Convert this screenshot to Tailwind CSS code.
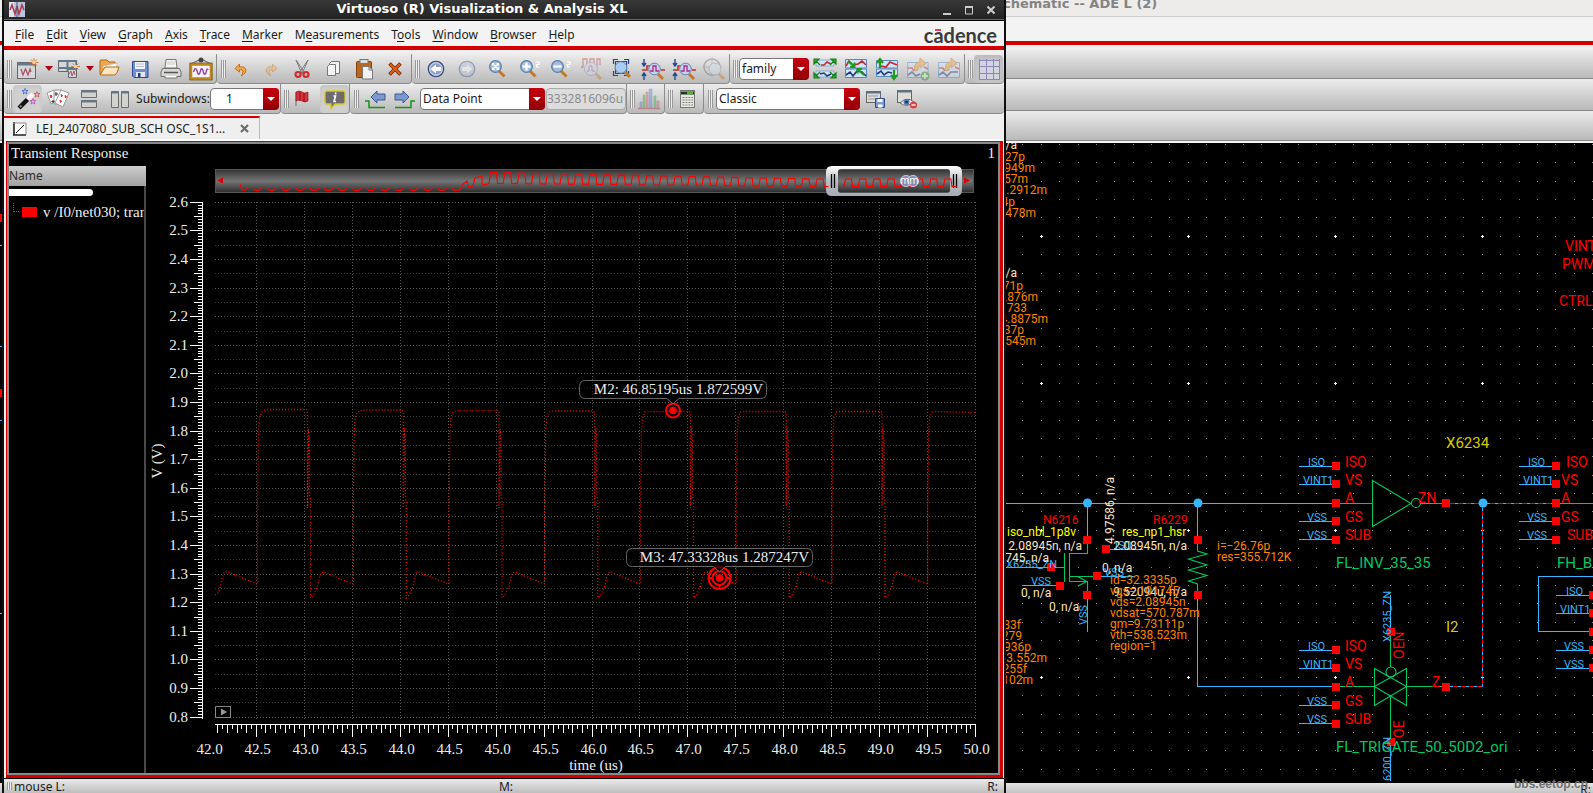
<!DOCTYPE html>
<html lang="en">
<head>
<meta charset="utf-8">
<title>Virtuoso (R) Visualization &amp; Analysis XL</title>
<script src="https://cdn.jsdelivr.net/npm/@tailwindcss/browser@4"></script>
</head>
<body class="h-screen overflow-hidden bg-black font-['Noto_Sans',sans-serif] text-[12px] text-[#1c1c1c]">
<main class="relative h-full overflow-hidden">

<!-- Schematic editor window, behind -->
<section aria-label="Schematic editor" class="flex h-full flex-col">
  <header class="flex h-[17px] shrink-0 items-end overflow-hidden border-b border-[#ccc] bg-[#edecea] pl-[1003px] pb-[2px] font-['DejaVu_Sans',sans-serif] text-[13px] leading-[20px] font-bold text-[#838383]"><span>chematic -- ADE L (2)</span></header>
  <div class="h-[24px] shrink-0 bg-[#f3f3f3]"></div>
  <div class="h-1 shrink-0 bg-[#d40000]"></div>
  <div class="h-[5px] shrink-0 bg-[#f0f0f0]"></div>
  <div class="h-[29px] shrink-0 border-b border-[#888] bg-linear-to-b from-[#ececec] to-[#b9b9b9]"></div>
  <div class="h-[32px] shrink-0 border-b border-[#888] bg-linear-to-b from-[#ececec] to-[#b9b9b9]"></div>
  <div class="h-[30px] shrink-0 border-b border-[#888] bg-linear-to-b from-[#ececec] to-[#b9b9b9]"></div>
  <div class="h-[2px] shrink-0 bg-[#f4f4f4]"></div>
  <div class="min-h-0 flex-1 bg-black">
    <svg class="h-full w-full" viewBox="0 143 1593 640" preserveAspectRatio="xMinYMin slice" font-family="Roboto, sans-serif" font-size="12">
      <g id="dots" shape-rendering="crispEdges"></g>
      <!-- wires -->
      <g fill="none" stroke="#35b6ff" stroke-width="1.2" shape-rendering="crispEdges">
        <path d="M0 245.5H3M0 346.5H3M0 420.5H3M0 613.5H3"/>
        <path d="M1004 503.5H1332M1087.5 503V536M1197.5 503V536M1197.5 599V686.5H1332"/>
        <path d="M1004 567.5H1047M1023 585.5H1056M1087.5 599V632M1110 549.5H1143M1101 576.5H1134"/>
        <path d="M1299 466.5H1332M1299 484.5H1332M1299 521.5H1332M1299 539.5H1332"/>
        <path d="M1299 650.5H1332M1299 668.5H1332M1299 705.5H1332M1299 723.5H1332"/>
        <path d="M1519 466.5H1552M1519 484.5H1552M1519 521.5H1552M1519 539.5H1552"/>
        <path d="M1593 576.5H1538.5V631.5H1589M1556 595.5H1589M1556 613.5H1589M1556 650.5H1589M1556 668.5H1589"/>
        <path d="M1390.5 595V628M1390.5 746V781"/>
        <path d="M1450 503.5H1552M1482.5 503V686.5H1450"/>
      </g>
      <path d="M1450 503.5H1552M1482.5 503V686.5H1450" fill="none" stroke="#f00" stroke-dasharray="5 3" shape-rendering="crispEdges"/>
      <!-- devices -->
      <g fill="none" stroke="#00c864" stroke-width="1.1">
        <path d="M1055 567.5H1064.5M1064.5 553V582M1069.5 553V582M1087.5 544V553.5H1069.5M1069.5 576.5H1093M1069.5 581.500H1087.5V591M1078 577L1087 581.5L1078 586"/>
        <path d="M1197.5 544V551L1207 554L1188.500 559L1207 565L1188.500 570L1207 575.500L1188.500 581L1197.500 584V591"/>
        <path d="M1340 503.500H1372.500M1372.500 480.500L1411 503.500L1372.500 526.500ZM1420.500 503.500H1442"/><circle cx="1416" cy="503" r="4.500"/>
        <path d="M1560 503.500H1593M1340 686.500H1374.500M1406.500 686.500H1442M1390.500 636V667M1390.500 696V738"/>
        <path d="M1374.500 668.500V705.500L1406.500 686.500ZM1406.500 668.500V705.500L1374.500 686.500ZM1374.500 668.500L1406.500 686.500"/><circle cx="1391" cy="672" r="5"/>
      </g>
      <g id="nodes" fill="#35b6ff">
        <circle cx="1087.500" cy="503" r="4.500"/><circle cx="1198" cy="503" r="4.500"/><circle cx="1483" cy="503" r="4.500"/>
      </g>
      <g id="pins" fill="#f00" shape-rendering="crispEdges"></g>
      <g fill="#35b6ff" font-size="11">
        <text x="1006" y="568">X6235_ZN</text><text x="1031" y="585">VSS</text><text x="1115" y="549">ISO</text><text x="1104" y="576">VSS</text>
        <text transform="translate(1087 625) rotate(-90)">VSS</text>
        <text x="1308" y="466">ISO</text><text x="1303" y="484">VINT1</text><text x="1307" y="521">VSS</text><text x="1307" y="539">VSS</text>
        <text x="1308" y="650">ISO</text><text x="1303" y="668">VINT1</text><text x="1307" y="705">VSS</text><text x="1307" y="723">VSS</text>
        <text x="1528" y="466">ISO</text><text x="1523" y="484">VINT1</text><text x="1527" y="521">VSS</text><text x="1527" y="539">VSS</text>
        <text x="1566" y="595">ISO</text><text x="1560" y="613">VINT1</text><text x="1564" y="650">VSS</text><text x="1564" y="668">VSS</text>
        <text transform="translate(1391 642) rotate(-90)">X6235_ZN</text><text transform="translate(1391 781) rotate(-90)">6200_ZN</text>
      </g>
      <g fill="#f00" font-size="14">
        <text x="1043" y="524" font-size="12">N6216</text><text x="1153" y="524" font-size="12">R6229</text>
        <text x="1565" y="251">VINT</text><text x="1562" y="269">PWM</text><text x="1559" y="306">CTRL</text>
        <text x="1345" y="467">ISO</text><text x="1345" y="485">VS</text><text x="1345" y="503">A</text><text x="1345" y="522">GS</text><text x="1345" y="540">SUB</text>
        <text x="1345" y="651">ISO</text><text x="1345" y="669">VS</text><text x="1345" y="687">A</text><text x="1345" y="706">GS</text><text x="1345" y="724">SUB</text>
        <text x="1566" y="467">ISO</text><text x="1561" y="485">VS</text><text x="1561" y="503">A</text><text x="1561" y="522">GS</text><text x="1567" y="540">SUB</text>
        <text x="1418" y="503">ZN</text><text x="1432" y="687">Z</text>
        <text transform="translate(1404 659) rotate(-90)">OEN</text><text transform="translate(1404 738) rotate(-90)">OE</text>
      </g>
      <g fill="#ff0"><text x="1007" y="536">iso_nbl_1p8v</text><text x="1122" y="536">res_np1_hsr</text></g>
      <g fill="#d8cc00" font-size="15"><text x="1446" y="448">X6234</text><text x="1446" y="632">I2</text></g>
      <g fill="#00c864" font-size="15"><text x="1336" y="568">FL_INV_35_35</text><text x="1557" y="568">FH_B</text><text x="1336" y="752">FL_TRIGATE_50_50D2_ori</text></g>
      <g fill="#ffe4c0">
        <text x="1082" y="550" text-anchor="end">2.08945n, n/a</text><text x="1187" y="550" text-anchor="end">2.08945n, n/a</text>
        <text x="1049" y="562" text-anchor="end">745, n/a</text><text x="1102" y="572">0, n/a</text><text x="1021" y="597">0, n/a</text><text x="1049" y="611">0, n/a</text>
        <text x="1187" y="596" text-anchor="end">9.52094u, n/a</text><text transform="translate(1114 544) rotate(-90)">4.97586, n/a</text>
        <text x="1017" y="149" text-anchor="end">n/a</text><text x="1017" y="277" text-anchor="end">n/a</text>
      </g>
      <g fill="#ff8200">
        <text x="1110" y="584">id=32.3335p</text><text x="1110" y="595">vgs=.101745</text><text x="1110" y="606">vds=2.08945n</text><text x="1110" y="617">vdsat=570.787m</text><text x="1110" y="628">gm=9.73111p</text><text x="1110" y="639">vth=538.523m</text><text x="1110" y="650">region=1</text>
        <text x="1217" y="550">i=−26.76p</text><text x="1217" y="561">res=355.712K</text>
      </g>
      <g fill="#ff8200" text-anchor="end">
        <text x="1021" y="629">83f</text><text x="1022" y="640">279</text><text x="1031" y="651">936p</text><text x="1047" y="662">3.552m</text><text x="1027" y="673">255f</text><text x="1033" y="684">102m</text>
        <text x="1025" y="161">27p</text><text x="1035" y="172">949m</text><text x="1028" y="183">57m</text><text x="1047" y="194">1.2912m</text><text x="1015" y="206">4p</text><text x="1036" y="217">478m</text>
        <text x="1023" y="290">71p</text><text x="1038" y="301">.876m</text><text x="1027" y="312">733</text><text x="1048" y="323">4.8875m</text><text x="1024" y="334">37p</text><text x="1036" y="345">545m</text>
      </g>
    </svg>
  </div>
  <footer class="relative flex h-[10px] shrink-0 justify-end bg-linear-to-b from-[#e4e4e4] to-[#c4c4c4] pr-[2px] leading-[14px]"><span class="absolute right-[5px] bottom-0 font-['Liberation_Sans',sans-serif] text-[12px] leading-[18px] font-bold text-[#707070]">bbs.eetop.cn</span><span>R:</span></footer>
</section>

<!-- Waveform viewer window, in front -->
<section aria-label="Visualization and Analysis" class="absolute inset-y-0 left-[2px] right-[587px] flex flex-col border-x-2 border-[#101010] bg-[#efefef]">
  <header class="flex h-[21px] shrink-0 items-center border-b border-black bg-linear-to-b from-[#383838] to-[#222] shadow-[inset_0_-1px_0_#4a6a90]">
    <svg class="ml-[5px] size-4" viewBox="0 0 16 16"><rect width="16" height="15" fill="#b9c4dc"/><path d="M0 0H5V15H0z" fill="#dfe4ef"/><path d="M1 8L3 3L6 12L8 4L10 12L13 3L15 8" fill="none" stroke="#b03848" stroke-width="1.500"/><path d="M8 0V15" stroke="#4a5c88"/></svg>
    <h1 class="flex-1 pb-[2px] text-center font-['DejaVu_Sans',sans-serif] text-[13px] leading-[16px] font-bold text-white">Virtuoso (R) Visualization &amp; Analysis XL</h1>
    <div class="flex gap-[6px] pr-[5px] pb-px">
      <button aria-label="Minimize" class="flex size-4 items-center justify-center"><svg class="size-3" viewBox="0 0 12 12"><path d="M2 10H10" stroke="#ccc" stroke-width="2"/></svg></button>
      <button aria-label="Maximize" class="flex size-4 items-center justify-center"><svg class="size-3" viewBox="0 0 12 12"><path d="M2.500 3V10H9.500V3" fill="none" stroke="#ccc"/><path d="M2 3H10" stroke="#ccc" stroke-width="2"/></svg></button>
      <button aria-label="Close" class="flex size-4 items-center justify-center"><svg class="size-3" viewBox="0 0 12 12"><path d="M2.500 2.500L9.500 9.500M9.500 2.500L2.500 9.500" stroke="#ccc" stroke-width="2"/></svg></button>
    </div>
  </header>

  <nav class="flex h-[25px] shrink-0 items-center bg-[#f3f3f3] pl-[5px] pt-[2px]">
    <button class="px-[6px]"><u class="underline-offset-2">F</u>ile</button><button class="px-[6px]"><u class="underline-offset-2">E</u>dit</button><button class="px-[6px]"><u class="underline-offset-2">V</u>iew</button><button class="px-[6px]"><u class="underline-offset-2">G</u>raph</button><button class="px-[6px]"><u class="underline-offset-2">A</u>xis</button><button class="px-[6px]"><u class="underline-offset-2">T</u>race</button><button class="px-[6px]"><u class="underline-offset-2">M</u>arker</button><button class="px-[6px]">M<u class="underline-offset-2">e</u>asurements</button><button class="px-[6px]">T<u class="underline-offset-2">o</u>ols</button><button class="px-[6px]"><u class="underline-offset-2">W</u>indow</button><button class="px-[6px]"><u class="underline-offset-2">B</u>rowser</button><button class="px-[6px]"><u class="underline-offset-2">H</u>elp</button>
    <span class="ml-auto pr-[7px] font-['Lato',sans-serif] text-[20px] leading-[20px] font-bold text-[#3a3a3a]">c<span class="relative">a<i class="absolute top-[6px] left-[2px] h-[2px] w-[6px] bg-[#e04050]"></i></span>dence</span>
  </nav>
  <div class="h-1 shrink-0 bg-[#d40000]"></div>
  <div class="h-1 shrink-0 bg-[#efefef]"></div>

  <!-- Toolbar, first row -->
  <div class="flex h-[30px] shrink-0">
    <div role="toolbar" class="flex w-[213px] items-center rounded-b border-r border-b border-[#8c8c8c] bg-linear-to-b from-[#ececec] to-[#b9b9b9]">
      <span class="ml-[3px] mr-px h-[18px] w-[5px] bg-[repeating-linear-gradient(90deg,#999_0_1px,#eee_1px_2px)]"></span>
      <button aria-label="New window" class="flex w-[28px] justify-center"><svg class="size-6" viewBox="0 0 24 24"><rect x="2.500" y="5.500" width="18" height="16" fill="#d4d8da" stroke="#666"/><path d="M2 7H21" stroke="#667888" stroke-width="3"/><path d="M6 12L8 18L10.500 12L13 18L15 12L16 15" fill="none" stroke="#b05065" stroke-width="1.300"/><path d="M19 1V10M14.500 5.500H23.500M16 2.500L22 8.500M22 2.500L16 8.500" stroke="#cf6a14" stroke-width=".8"/><circle cx="19" cy="5.500" r="1.800" fill="#fc9"/></svg></button>
      <button aria-label="New window options" class="flex w-[12px] justify-end"><svg class="h-[5px] w-[8px]" viewBox="0 0 8 5"><path d="M0 0H8L4 5z" fill="#b00010"/></svg></button>
      <button aria-label="New subwindow" class="flex w-[30px] justify-center"><svg class="size-6" viewBox="0 0 24 24"><path d="M2.500 3.500H20.500V20.500H12.500V14.500H2.500z" fill="#d4d8da" stroke="#666"/><path d="M2 4H21M11.500 4V14M2 11H11" stroke="#667888" stroke-width="2"/><path d="M12 11.500H20" stroke="#667888" stroke-width="3"/><path d="M13 17L15 14L16 19L18 14L19 18" fill="none" stroke="#b05065"/><path d="M19.500 5V14M15 9.500H24M16.500 6.500L22.500 12.500M22.500 6.500L16.500 12.500" stroke="#cf6a14" stroke-width=".8"/><circle cx="19.500" cy="9.500" r="1.800" fill="#fc9"/></svg></button>
      <button aria-label="New subwindow options" class="flex w-[11px] justify-end"><svg class="h-[5px] w-[8px]" viewBox="0 0 8 5"><path d="M0 0H8L4 5z" fill="#b00010"/></svg></button>
      <button aria-label="Open" class="flex w-[31px] justify-center"><svg class="size-6" viewBox="0 0 24 24"><path d="M3 17V4Q3 3 4 3H10L12 5H18V9" fill="#eda64c" stroke="#b5660f"/><path d="M6 9L20 6L19 16L7 17z" fill="#fff" stroke="#aaa" stroke-width=".6"/><path d="M3 18L8 10H22Q20 17 18 18z" fill="#ffe6c0" stroke="#b5660f"/></svg></button>
      <button aria-label="Save" class="flex w-[31px] justify-center"><svg class="size-6" viewBox="0 0 24 24"><path d="M4.500 4.500H20V20.500H6L4.500 19z" fill="#6f90cc" stroke="#2c4a94"/><path d="M7 5H17V12H7z" fill="#f4f6fa"/><path d="M8 7H16M8 9.500H16" stroke="#b4bccc"/><path d="M8 15H17V20H8z" fill="#dfe4ee"/><path d="M10 16H12.500V20H10z" fill="#24407c"/></svg></button>
      <button aria-label="Print" class="flex w-[31px] justify-center"><svg class="size-6" viewBox="0 0 24 24"><path d="M6 11L7 2.500H17L18 11z" fill="#f4f4f4" stroke="#777"/><path d="M8 5H16M8 7H16" stroke="#ccc"/><path d="M3.500 11.500H20.500L22 15V19.500H2V15z" fill="#d8d8d4" stroke="#707070"/><path d="M5 15.500H19" stroke="#555" stroke-width="1.500"/><path d="M6 19V21H18V19" fill="#fff" stroke="#777"/></svg></button>
      <button aria-label="Save image" class="flex w-[30px] justify-center"><svg class="size-6" viewBox="0 0 24 24"><path d="M2 7L12 2L22 7" fill="none" stroke="#555"/><circle cx="12" cy="3" r="2.500" fill="#444"/><rect x="2" y="7.500" width="20" height="14" fill="#faf6ff" stroke="#c08a1c" stroke-width="2.600"/><path d="M.8 6H23.200V23H.8z" fill="none" stroke="#6d4c0c" stroke-width=".7"/><path d="M4.500 15L6 11.500L7.500 12L9 17L10.500 17L12 12L13.500 12L15 17L16.500 17L18 12L19.500 12.500" fill="none" stroke="#9038a8" stroke-width="1.300" stroke-linejoin="round"/></svg></button>
    </div>
    <div role="toolbar" class="flex w-[195px] items-center rounded-b border-r border-b border-[#8c8c8c] bg-linear-to-b from-[#ececec] to-[#b9b9b9]">
      <span class="ml-[4px] mr-px h-[18px] w-[5px] bg-[repeating-linear-gradient(90deg,#999_0_1px,#eee_1px_2px)]"></span>
      <button aria-label="Undo" class="flex w-[28px] justify-center"><svg class="size-6" viewBox="0 0 24 24"><path d="M12 19Q18 16 16.500 12Q15 9 10.500 10.200V7L6 11.500L10.500 15V12.800Q14 12 14 14.500Q14 17 12 19z" fill="#f8a84a" stroke="#c86c10"/></svg></button>
      <button aria-label="Redo" class="flex w-[31px] justify-center opacity-40"><svg class="size-6" viewBox="0 0 24 24"><path d="M12 19Q6 16 7.500 12Q9 9 13.500 10.200V7L18 11.500L13.500 15V12.800Q10 12 10 14.500Q10 17 12 19z" fill="#f8a84a" stroke="#c86c10"/></svg></button>
      <button aria-label="Cut" class="flex w-[31px] justify-center"><svg class="size-6" viewBox="0 0 24 24"><path d="M6 3L14 15L12 16.500zM18 3L10 15L12 16.500z" fill="#f2f2f2" stroke="#777"/><circle cx="8" cy="17.500" r="2.500" fill="none" stroke="#d42a2a" stroke-width="2.200"/><circle cx="16" cy="17.500" r="2.500" fill="none" stroke="#d42a2a" stroke-width="2.200"/></svg></button>
      <button aria-label="Copy" class="flex w-[31px] justify-center"><svg class="size-6" viewBox="0 0 24 24"><path d="M10.500 4.500H18.500V16.500H8.500V6.500z" fill="#f4f4f4" stroke="#777"/><path d="M8.500 7.500H14.500V18.500H6.500V9.500z" fill="#f4f4f4" stroke="#777"/></svg></button>
      <button aria-label="Paste" class="flex w-[31px] justify-center"><svg class="size-6" viewBox="0 0 24 24"><rect x="4.500" y="4.500" width="15" height="16" rx="1" fill="#b8681c" stroke="#804010"/><rect x="8" y="2.500" width="8" height="4" fill="#ddd" stroke="#777"/><path d="M10.500 9.500H17L20.500 13V22H10.500z" fill="#f2f2f2" stroke="#777"/><path d="M17 9.500V13H20.500" fill="none" stroke="#777"/></svg></button>
      <button aria-label="Delete" class="flex w-[31px] justify-center"><svg class="size-6" viewBox="0 0 24 24"><path d="M6.500 6.500L17.500 17.500M17.500 6.500L6.500 17.500" stroke="#7c2400" stroke-width="3.600"/><path d="M7 7L17 17M17 7L7 17" stroke="#e06418" stroke-width="1.800"/></svg></button>
    </div>
    <div role="toolbar" class="flex w-[318px] items-center rounded-b border-r border-b border-[#8c8c8c] bg-linear-to-b from-[#ececec] to-[#b9b9b9]">
      <span class="ml-[3px] mr-px h-[18px] w-[5px] bg-[repeating-linear-gradient(90deg,#999_0_1px,#eee_1px_2px)]"></span>
      <button aria-label="Previous view" class="flex w-[30px] justify-center"><svg class="size-6" viewBox="0 0 24 24"><circle cx="12" cy="12" r="7.700" fill="#8fa0cc" stroke="#3a4f80" stroke-width="1.300"/><circle cx="12" cy="12" r="6.300" fill="none" stroke="#dde4f4"/><path d="M6.500 12L12 7.500V10H17V14H12V16.500z" fill="#fff"/></svg></button>
      <button aria-label="Next view" class="flex w-[31px] justify-center opacity-40"><svg class="size-6" viewBox="0 0 24 24"><circle cx="12" cy="12" r="7.700" fill="#b4c0dc" stroke="#3a4f80" stroke-width="1.300"/><path d="M17.500 12L12 7.500V10H7V14H12V16.500z" fill="#fff"/></svg></button>
      <button aria-label="Zoom" class="flex w-[31px] justify-center"><svg class="size-6" viewBox="0 0 24 24"><path d="M13 14L18.500 19.500" stroke="#c87820" stroke-width="3"/><circle cx="9.500" cy="9.500" r="5.800" fill="#a4bede" stroke="#5a7ca8" stroke-width="1.300"/><path d="M7 7L12 12M12 7L7 12M6.500 8.500V6.500H8.500M10.500 6.500H12.500V8.500M6.500 10.500V12.500H8.500M10.500 12.500H12.500V10.500" stroke="#fff" stroke-width="1.200" fill="none"/></svg></button>
      <button aria-label="Zoom in" class="flex w-[31px] justify-center"><svg class="size-6" viewBox="0 0 24 24"><path d="M13 14L18.500 19.500" stroke="#c87820" stroke-width="3"/><circle cx="9.500" cy="9.500" r="5.800" fill="#a4bede" stroke="#5a7ca8" stroke-width="1.300"/><path d="M5.500 9.500H13.500M9.500 5.500V13.500" stroke="#fff" stroke-width="2.300"/><path d="M19 5H22V7.500H19.500V10H22" fill="none" stroke="#fff" stroke-width="1.200"/></svg></button>
      <button aria-label="Zoom out" class="flex w-[31px] justify-center"><svg class="size-6" viewBox="0 0 24 24"><path d="M13 14L18.500 19.500" stroke="#c87820" stroke-width="3"/><circle cx="9.500" cy="9.500" r="5.800" fill="#a4bede" stroke="#5a7ca8" stroke-width="1.300"/><path d="M5.500 9.500H13.500" stroke="#fff" stroke-width="2.300"/><path d="M19 5H22V7.500H19.500V10H22" fill="none" stroke="#fff" stroke-width="1.200"/></svg></button>
      <button aria-label="Zoom to trace" class="flex w-[31px] justify-center opacity-40"><svg class="size-6" viewBox="0 0 24 24"><path d="M2 10H4V2H8V9H11V2H15V9H18V2H21V8" fill="none" stroke="#c03030" stroke-width="1.300"/><path d="M16 16L22 22" stroke="#c87820" stroke-width="3"/><circle cx="12" cy="12" r="6.500" fill="#c8d4ec" stroke="#7a8cb0"/><path d="M8 14H10V9H13V14H16" fill="none" stroke="#c03080"/></svg></button>
      <button aria-label="Fit" class="flex w-[31px] justify-center"><svg class="size-6" viewBox="0 0 24 24"><path d="M3.500 7V2.500H8M14 2.500H18.500V7M3.500 14V18.500H8M14 18.500H18.500V14M5.500 4.500H16.500V16.500H5.500z" fill="none" stroke="#1e4a84" stroke-width="1.200"/><path d="M15 15L20 20" stroke="#c87820" stroke-width="3"/><circle cx="11" cy="10.500" r="5.800" fill="#a8cdf0" stroke="#5a86b8"/></svg></button>
      <button aria-label="Fit Y" class="flex w-[31px] justify-center"><svg class="size-6" viewBox="0 0 24 24"><path d="M3 2V8M1 6L3 9L5 6M3 23V17M1 19L3 16L5 19" stroke="#1e4a94" stroke-width="1.400" fill="none"/><path d="M1 13H6V9H9M20 13H24" stroke="#c03030" stroke-width="1.600" fill="none"/><path d="M17 17L22 22" stroke="#c87820" stroke-width="3"/><circle cx="13.500" cy="12" r="5.800" fill="#c4d4f0" stroke="#6a80a8"/><path d="M9 14H12V9H15V14H18" fill="none" stroke="#b02880" stroke-width="1.300"/></svg></button>
      <button aria-label="Fit Y all" class="flex w-[31px] justify-center"><svg class="size-6" viewBox="0 0 24 24"><path d="M3 2V8M1 6L3 9L5 6M3 23V17M1 19L3 16L5 19" stroke="#1e4a94" stroke-width="1.400" fill="none"/><path d="M1 13H6V9H9M20 13H24" stroke="#c03030" stroke-width="1.600" fill="none"/><path d="M17 17L22 22" stroke="#c87820" stroke-width="3"/><circle cx="13.500" cy="12" r="5.800" fill="#c4d4f0" stroke="#6a80a8"/><path d="M9 14H12V9H15V14H18" fill="none" stroke="#b02880" stroke-width="1.300"/></svg></button>
      <button aria-label="Zoom target" class="flex w-[30px] justify-center opacity-40"><svg class="size-6" viewBox="0 0 24 24"><path d="M16 16L22 22" stroke="#c87820" stroke-width="3"/><circle cx="10" cy="10" r="8" fill="none" stroke="#666" stroke-width="1.500"/><path d="M10 0V20M0 10H20" stroke="#888"/><circle cx="13" cy="12" r="6" fill="#d0dcec" stroke="#8090a8"/></svg></button>
    </div>
    <div role="toolbar" class="flex w-[235px] items-center rounded-b border-r border-b border-[#8c8c8c] bg-linear-to-b from-[#ececec] to-[#b9b9b9]">
      <span class="ml-[3px] mr-px h-[18px] w-[5px] bg-[repeating-linear-gradient(90deg,#999_0_1px,#eee_1px_2px)]"></span>
      <label class="relative block h-[22px] w-[70px]"><select aria-label="Strip mode" class="h-full w-full appearance-none rounded border border-[#777] bg-white pl-[2px] text-[12px]"><option>family</option></select><span class="pointer-events-none absolute inset-y-0 right-0 flex w-4 items-center justify-center rounded-r bg-linear-to-b from-[#c8000c] to-[#920008]"><svg class="h-1 w-2" viewBox="0 0 8 4"><path d="M0 0H8L4 4z" fill="#fff"/></svg></span></label>
      <button aria-label="Split all strips" class="flex w-[31px] justify-center"><svg class="size-6" viewBox="0 0 24 24"><path d="M3 3H21V9H3zM3 14H21V20H3z" fill="#d0e4fa" stroke="#7098c8" stroke-width=".7"/><path d="M8 8H11L14 5L18 7" fill="none" stroke="#c02828" stroke-width="1.500"/><path d="M7 17L11 16L14 19L18 17" fill="none" stroke="#203878" stroke-width="1.500"/><path d="M1 2H6L1 7zM23 2H18L23 7zM1 21H6L1 16zM23 21H18L23 16zM3 4L7 8M21 4L17 8M3 19L7 15M21 19L17 15" fill="#2fa82f" stroke="#168016" stroke-width="1.200"/></svg></button>
      <button aria-label="Combine strips" class="flex w-[31px] justify-center"><svg class="size-6" viewBox="0 0 24 24"><path d="M1.500 2.500H22.500V11H1.500zM1.500 12H22.500V20.500H1.500z" fill="#cfe3fa" stroke="#5888c0"/><path d="M2 9L5 4L9 8L14 7L18 4L22 8" fill="none" stroke="#c02828" stroke-width="1.600"/><path d="M2 18L6 15L9 19L13 14L18 15L22 19" fill="none" stroke="#203878" stroke-width="1.600"/><path d="M4 4L10 9.500M20 18L14 12.500M10.500 5.500V10H6M13.500 16.500V12H18" fill="none" stroke="#1f9a1f" stroke-width="2"/></svg></button>
      <button aria-label="Swap strips" class="flex w-[31px] justify-center"><svg class="size-6" viewBox="0 0 24 24"><path d="M1.500 3.500H22.500V11H1.500zM1.500 12H22.500V19.500H1.500z" fill="#cfe3fa" stroke="#5888c0"/><path d="M6 9L11 10L15 5L22 8" fill="none" stroke="#c02828" stroke-width="1.600"/><path d="M2 17L6 14L9 18L13 15L17 16" fill="none" stroke="#203878" stroke-width="1.600"/><path d="M5 11V3M2 6L5 2L8 6M19 13V21M16 18L19 22L22 18" fill="none" stroke="#1f9a1f" stroke-width="2.200"/></svg></button>
      <button aria-label="Append reload" class="flex w-[31px] justify-center opacity-45"><svg class="size-6" viewBox="0 0 24 24"><path d="M1.500 5.500H22V20.500H1.500z" fill="#cfe3fa" stroke="#5888c0"/><path d="M2 11H6L8 14M18 10L22 12" fill="none" stroke="#c02828" stroke-width="1.600"/><path d="M2 18L6 15L10 19L14 17" fill="none" stroke="#203878" stroke-width="1.600"/><path d="M9 14Q7 5 14 5V1L20 6.500L14 11V8Q11 9 12 13z" fill="#f0a040" stroke="#c87010"/><circle cx="19" cy="19" r="4.500" fill="#2a9a2a"/><path d="M16 19H22M19 16V22" stroke="#fff" stroke-width="1.500"/></svg></button>
      <button aria-label="Reload" class="flex w-[31px] justify-center opacity-45"><svg class="size-6" viewBox="0 0 24 24"><path d="M1.500 5.500H22.500V20.500H1.500z" fill="#cfe3fa" stroke="#5888c0"/><path d="M2 11H6L8 14M18 10L22 12" fill="none" stroke="#c02828" stroke-width="1.600"/><path d="M2 18L6 15L10 19L14 15H21" fill="none" stroke="#203878" stroke-width="1.600"/><path d="M9 14Q7 5 14 5V1L20 6.500L14 11V8Q11 9 12 13z" fill="#f0a040" stroke="#c87010"/></svg></button>
    </div>
    <div role="toolbar" class="flex flex-1 items-center rounded-b border-b border-[#8c8c8c] bg-linear-to-b from-[#ececec] to-[#b9b9b9]">
      <span class="ml-[3px] mr-px h-[18px] w-[5px] bg-[repeating-linear-gradient(90deg,#999_0_1px,#eee_1px_2px)]"></span>
      <button aria-label="Grid" aria-pressed="true" class="flex h-[28px] w-[29px] items-center justify-center rounded bg-[#c4c4c6] shadow-inner"><svg class="size-6" viewBox="0 0 24 24"><path d="M2 3H22V23H2z" fill="#d4d4de"/><path d="M2.500 2V23M9.500 2V23M16.500 2V23M22.500 2V23M2 3.500H23M2 9.500H23M2 16.500H23M2 22.500H23" stroke="#8c86bc" stroke-width="1"/></svg></button>
    </div>
  </div>

  <!-- Toolbar, second row -->
  <div class="flex h-[30px] shrink-0">
    <div role="toolbar" class="flex w-[277px] items-center rounded-b border-r border-b border-[#8c8c8c] bg-linear-to-b from-[#ececec] to-[#b9b9b9]">
      <span class="ml-[3px] mr-px h-[18px] w-[5px] bg-[repeating-linear-gradient(90deg,#999_0_1px,#eee_1px_2px)]"></span>
      <button aria-label="Wizard" aria-pressed="true" class="flex h-[28px] w-[29px] items-center justify-center rounded bg-[#d0d0d0] shadow-inner"><svg class="size-6" viewBox="0 0 24 24"><path d="M3 21L12 12" stroke="#111" stroke-width="4.500"/><path d="M11.500 12.500L17 7" stroke="#fafafa" stroke-width="4.500"/><path d="M4 20L5.500 18.500" stroke="#888" stroke-width="2"/><path d="M9 1.500L9.700 3.500H12L10.200 4.800L10.900 7L9 5.700L7.100 7L7.800 4.800L6 3.500H8.300z" fill="none" stroke="#4070e0" stroke-width=".9"/><path d="M21 4.500L21.700 6.500H24L22.200 7.800L22.900 10L21 8.700L19.100 10L19.800 7.800L18 6.500H20.300z" fill="none" stroke="#e05050" stroke-width=".9"/><path d="M17 11.500L17.700 13.500H20L18.200 14.800L18.900 17L17 15.700L15.100 17L15.800 14.800L14 13.500H16.300z" fill="none" stroke="#c050c0" stroke-width=".9"/></svg></button>
      <button aria-label="Cards" class="flex w-[31px] justify-center"><svg class="size-6" viewBox="0 0 24 24"><path d="M1 6L8 3L12 14L5 17z" fill="#fff" stroke="#999"/><path d="M8 3H16V17H8z" fill="#fff" stroke="#999"/><path d="M15 3L23 6L17 20L9 16z" fill="#fff" stroke="#999"/><path d="M4 8L6 9L5 11zM15 7.500L16.500 8.500L15.500 10zM19 8.500L20.500 9.500L19.500 11zM14 13L15.500 14L14.500 15.500z" fill="#e03030" stroke="#e03030"/><path d="M10 5V9M8.500 7H12M7 13V16M5.500 14.500H8.500" stroke="#333"/></svg></button>
      <button aria-label="Horizontal layout" class="flex w-[31px] justify-center"><svg class="size-6" viewBox="0 0 24 24"><path d="M4.500 3.500H19.500V10.500H4.500zM4.500 13.500H19.500V20.500H4.500z" fill="#d2d2ce" stroke="#6c6c6c"/><path d="M4 4.500H20M4 14.500H20" stroke="#66788c" stroke-width="2"/></svg></button>
      <button aria-label="Vertical layout" class="flex w-[31px] justify-center"><svg class="size-6" viewBox="0 0 24 24"><path d="M3.500 4.500H10.500V20.500H3.500zM13.500 4.500H20.500V20.500H13.500z" fill="#d2d2ce" stroke="#6c6c6c"/><path d="M3 5.500H11M13 5.500H21" stroke="#66788c" stroke-width="2"/></svg></button>
      <label for="sub" class="w-[75px] text-right whitespace-nowrap">Subwindows:</label>
      <span class="relative block h-[22px] w-[69px]"><select id="sub" class="h-full w-full appearance-none rounded border border-[#777] bg-white pl-[15px] text-[12px]"><option>1</option></select><span class="pointer-events-none absolute inset-y-0 right-0 flex w-4 items-center justify-center rounded-r bg-linear-to-b from-[#c8000c] to-[#920008]"><svg class="h-1 w-2" viewBox="0 0 8 4"><path d="M0 0H8L4 4z" fill="#fff"/></svg></span></span>
    </div>
    <div role="toolbar" class="flex w-[69px] items-center justify-between rounded-b border-r border-b border-[#8c8c8c] bg-linear-to-b from-[#ececec] to-[#b9b9b9]">
      <span class="ml-[3px] h-[18px] w-[5px] bg-[repeating-linear-gradient(90deg,#999_0_1px,#eee_1px_2px)]"></span>
      <button aria-label="Flag" class="flex w-[30px] justify-start"><svg class="size-6" viewBox="0 0 24 24"><path d="M6 5V19" stroke="#888" stroke-width="1.500"/><path d="M6 5Q9 3 12 5T18 5V14Q15 16 12 14T6 14z" fill="#d83038" stroke="#8c1018" stroke-width=".6"/><path d="M10 5V14M14 6V15" stroke="#a81820" stroke-width="1.500"/></svg></button>
      <button aria-label="Info" aria-pressed="true" class="flex h-[28px] w-[29px] items-center justify-center rounded bg-[#cfcfcf] shadow-inner"><svg class="size-6" viewBox="0 0 24 24"><path d="M4 4H20Q22 4 22 6V15Q22 17 20 17H12L8 22V17H4Q2 17 2 15V6Q2 4 4 4z" fill="#6c6c6c" stroke="#d8c820" stroke-width="1.300"/><path d="M10.500 9H12.500L11 14.500H13M12.800 5.500L12.500 7.300" stroke="#fff" stroke-width="1.600" fill="none"/></svg></button>
    </div>
    <div role="toolbar" class="flex w-[277px] items-center rounded-b border-r border-b border-[#8c8c8c] bg-linear-to-b from-[#ececec] to-[#b9b9b9]">
      <span class="ml-[4px] mr-px h-[18px] w-[5px] bg-[repeating-linear-gradient(90deg,#999_0_1px,#eee_1px_2px)]"></span>
      <button aria-label="Previous point" class="flex w-[30px] justify-center"><svg class="size-6" viewBox="0 0 24 24"><path d="M2 14H6V20.500H22" fill="none" stroke="#149414" stroke-width="1.500"/><path d="M8 10L14 4V7H22V13H14V16z" fill="#7c98d0" stroke="#3c5890"/></svg></button>
      <button aria-label="Next point" class="flex w-[30px] justify-center"><svg class="size-6" viewBox="0 0 24 24"><path d="M2 20.500H18V14H22" fill="none" stroke="#149414" stroke-width="1.500"/><path d="M16 10L10 4V7H2V13H10V16z" fill="#7c98d0" stroke="#3c5890"/></svg></button>
      <span class="relative block h-[22px] w-[125px]"><select aria-label="Step by" class="h-full w-full appearance-none rounded border border-[#777] bg-white pl-[2px] text-[12px]"><option>Data Point</option></select><span class="pointer-events-none absolute inset-y-0 right-0 flex w-4 items-center justify-center rounded-r bg-linear-to-b from-[#c8000c] to-[#920008]"><svg class="h-1 w-2" viewBox="0 0 8 4"><path d="M0 0H8L4 4z" fill="#fff"/></svg></span></span>
      <input aria-label="Step value" disabled value="3332816096u" class="ml-px h-[22px] w-[80px] rounded border border-[#aaa] bg-[#dcdcdc] px-0 text-[12px] text-[#8a8a8a]">
    </div>
    <div role="toolbar" class="flex w-[38px] items-center rounded-b border-r border-b border-[#8c8c8c] bg-linear-to-b from-[#ececec] to-[#b9b9b9]">
      <span class="ml-[3px] mr-px h-[18px] w-[5px] bg-[repeating-linear-gradient(90deg,#999_0_1px,#eee_1px_2px)]"></span>
      <button aria-label="Histogram" class="flex w-[26px] justify-center opacity-40"><svg class="size-6" viewBox="0 0 24 24"><path d="M3 21V15H5V21M12 21V2H15V21" fill="#5080e0" stroke="#4060b0" stroke-width=".6"/><path d="M6 21V8H8V21M17 21V9H19V21" fill="#30b040" stroke="#208030" stroke-width=".6"/><path d="M9 21V5H11V21M20 21V14H22V21" fill="#e06060" stroke="#b03030" stroke-width=".6"/><path d="M1 21.500H23" stroke="#b03030" stroke-width="1.500"/></svg></button>
    </div>
    <div role="toolbar" class="flex w-[39px] items-center rounded-b border-r border-b border-[#8c8c8c] bg-linear-to-b from-[#ececec] to-[#b9b9b9]">
      <span class="ml-[3px] mr-px h-[18px] w-[5px] bg-[repeating-linear-gradient(90deg,#999_0_1px,#eee_1px_2px)]"></span>
      <button aria-label="Calculator" class="flex w-[28px] justify-center"><svg class="size-6" viewBox="0 0 24 24"><rect x="4.500" y="3.500" width="14" height="17" fill="#e6e6e2" stroke="#777"/><path d="M5 6H18" stroke="#1d3a1d" stroke-width="3"/><path d="M11 6H17" stroke="#68e028" stroke-width="1.500"/><path d="M6.500 10.500H17M6.500 13H17M6.500 15.500H17M6.500 18H17" stroke="#777" stroke-width="1.200" stroke-dasharray="1.800 1.200"/></svg></button>
    </div>
    <div role="toolbar" class="flex flex-1 items-center rounded-b border-b border-[#8c8c8c] bg-linear-to-b from-[#ececec] to-[#b9b9b9]">
      <span class="ml-[4px] mr-[3px] h-[18px] w-[5px] bg-[repeating-linear-gradient(90deg,#999_0_1px,#eee_1px_2px)]"></span>
      <span class="relative block h-[22px] w-[144px]"><select aria-label="Workspace" class="h-full w-full appearance-none rounded border border-[#777] bg-white pl-[2px] text-[12px]"><option>Classic</option></select><span class="pointer-events-none absolute inset-y-0 right-0 flex w-4 items-center justify-center rounded-r bg-linear-to-b from-[#c8000c] to-[#920008]"><svg class="h-1 w-2" viewBox="0 0 8 4"><path d="M0 0H8L4 4z" fill="#fff"/></svg></span></span>
      <button aria-label="Save workspace" class="flex w-[31px] justify-center"><svg class="size-6" viewBox="0 0 24 24"><rect x="2.500" y="4.500" width="14" height="11" fill="#dcdcd8" stroke="#666"/><path d="M2 5.500H17" stroke="#5c7488" stroke-width="2"/><path d="M4 9H14M4 12H11" stroke="#999"/><path d="M11.500 11.500H20.500V20.500H11.500z" fill="#7c98d4" stroke="#344c90"/><path d="M13.500 12H18.500V15H13.500zM14 17.500H18.500V20.500H14z" fill="#fff"/></svg></button>
      <button aria-label="Hide" class="flex w-[31px] justify-center"><svg class="size-6" viewBox="0 0 24 24"><rect x="2.500" y="3.500" width="14" height="12" fill="#dcdcd8" stroke="#666"/><path d="M2 4.500H17" stroke="#5c7488" stroke-width="2"/><path d="M5 16Q12 9 19 15Q12 21 5 16z" fill="#f4f6fa" stroke="#666"/><circle cx="11.500" cy="15" r="3" fill="#5878b0"/><circle cx="11.500" cy="15" r="1.300" fill="#182850"/><circle cx="18.500" cy="18" r="3.600" fill="#d84444"/><path d="M16.500 18H20.500" stroke="#fff" stroke-width="1.300"/></svg></button>
    </div>
  </div>

  <!-- Document tab -->
  <div class="flex h-[27px] shrink-0 border-b-2 border-white pt-[2px]">
    <div class="flex w-[256px] items-center border-t-2 border-r border-t-[#d40000] border-r-[#bbb] pl-[9px]">
      <svg class="size-[14px]" viewBox="0 0 14 14"><path d="M1 1H13V13H1z" fill="#fff"/><path d="M1 0V13M0 13H13" stroke="#222" stroke-width="1.600"/><path d="M0 1H13V13" fill="none" stroke="#888"/><path d="M3 11L11 3" stroke="#222"/></svg>
      <span class="ml-[9px] whitespace-nowrap">LEJ_2407080_SUB_SCH OSC_1S1...</span>
      <button aria-label="Close tab" class="mr-[10px] ml-auto"><svg class="size-[9px]" viewBox="0 0 9 9"><path d="M1 1L8 8M8 1L1 8" stroke="#6c6c6c" stroke-width="2.200"/></svg></button>
    </div>
  </div>

  <!-- Plot subwindow -->
  <div class="mr-px ml-[2px] flex min-h-0 flex-1 flex-col border-t border-r-3 border-b-3 border-l border-[#d40000] bg-black font-['Liberation_Serif',serif] text-[15px] text-[#eee]">
    <div class="flex min-h-0 flex-1 flex-col border-2 border-[#888]">
      <div class="flex h-[22px] shrink-0 items-center justify-between px-[2px] pb-[3px] leading-[19px]"><span>Transient Response</span><span class="pr-px">1</span></div>
      <div class="flex min-h-0 flex-1">
        <aside class="w-[137px] shrink-0 overflow-hidden bg-linear-to-l from-[#484848] from-[2px] to-black to-[2px]">
          <div class="h-5 bg-linear-to-b from-[#cdcdcd] to-[#a2a2a2] font-['Noto_Sans',sans-serif] text-[12px] leading-[19px] text-[#2c2c2c]">Name</div>
          <div class="mt-[3px] h-[7px] w-[84px] rounded-r-full bg-white"></div>
          <div class="mt-[6px] mr-[2px] flex h-5 items-center overflow-hidden whitespace-nowrap"><span class="ml-[4px] mb-[9px] h-[9px] w-[6px] shrink-0 border-b border-l border-dotted border-[#666]"></span><span class="ml-[3px] h-[10px] w-[15px] shrink-0 bg-[#f00]"></span><span class="ml-[6px]">v /I0/net030; tran</span></div>
        </aside>
        <div class="min-w-0 flex-1">
          <svg class="h-full w-full" viewBox="146 166 852 607" preserveAspectRatio="xMinYMin meet" font-family="Liberation Serif, serif" font-size="15" fill="#eee">
            <defs>
              <linearGradient id="track" x2="0" y2="1"><stop offset="0" stop-color="#333"/><stop offset=".5" stop-color="#757575"/><stop offset="1" stop-color="#2c2c2c"/></linearGradient>
              <linearGradient id="thumb" x2="0" y2="1"><stop offset="0" stop-color="#fff"/><stop offset=".5" stop-color="#b8bcc2"/><stop offset="1" stop-color="#a4acb8"/></linearGradient>
            </defs>
            <rect x="215.500" y="169.500" width="758" height="23" fill="url(#track)" stroke="#555"/>
            <path d="M832 166H956Q962 166 962 172V190Q962 196 956 196H832Q826 196 826 190V172Q826 166 832 166ZM841 169Q838 169 838 172V190Q838 193 841 193H947Q950 193 950 190V172Q950 169 947 169Z" fill="url(#thumb)" fill-rule="evenodd"/>
            <path d="M831.500 174V188M834.500 174V188M953.500 174V188M956.500 174V188" stroke="#000" stroke-width="1.300"/>
            <path d="M217 180.500L223 177.500V183.500zM970 180.500L964 177.500V183.500z" fill="#d00"/>
            <path id="overview" fill="none" stroke="#f00" stroke-width="1.100"/>
            <g font-family="Noto Sans, sans-serif" font-size="10" text-anchor="middle"><circle cx="906" cy="181" r="5.500" fill="#8a8ab0" stroke="#ccd"/><circle cx="913" cy="181" r="5.500" fill="#8a8ab0" stroke="#ccd"/><text x="905" y="184" fill="#fff">m</text><text x="914" y="184" fill="#fff">m</text></g>
            <g id="grid" shape-rendering="crispEdges"></g>
            <g id="axes" stroke="#fff" shape-rendering="crispEdges"></g>
            <g id="labels"></g>
            <path id="wave" fill="none" stroke="#f00" stroke-dasharray="1 2" stroke-width="1.300"/>
            <text x="596" y="770" text-anchor="middle">time (us)</text>
            <text transform="translate(162 461) rotate(-90)" text-anchor="middle">V (V)</text>
            <g fill="none" stroke="#888"><path d="M215.500 706.500H230.500V717.500H215.500z"/><path d="M221 708.500L227 712L221 715.500z" fill="#999" stroke="none"/></g>
            <g fill="none" stroke="#f00" stroke-width="2"><circle cx="673" cy="410.500" r="7"/><circle cx="673" cy="410.500" r="3.800" fill="#f00" stroke="none"/><circle cx="719.500" cy="578" r="11"/><circle cx="719.500" cy="578" r="7"/><circle cx="719.500" cy="578" r="3.800" fill="#f00" stroke="none"/><path d="M719.500 585V588M709 578H712M727 578H730"/></g>
            <g stroke="#666" fill="#000" fill-opacity=".6">
              <path d="M585.500 380.500H760.500Q766.500 380.500 766.500 386.500V392.500Q766.500 398.500 760.500 398.500H679L673 404L667 398.500H585.500Q579.500 398.500 579.500 392.500V386.500Q579.500 380.500 585.500 380.500z"/>
              <path d="M632.500 548.500H806.500Q812.500 548.500 812.500 554.500V560.500Q812.500 566.500 806.500 566.500H725.500L719.500 572L713.500 566.500H632.500Q626.500 566.500 626.500 560.500V554.500Q626.500 548.500 632.500 548.500z"/>
            </g>
            <text x="763" y="394" text-anchor="end">M2: 46.85195us 1.872599V</text>
            <text x="809" y="562" text-anchor="end">M3: 47.33328us 1.287247V</text>
          </svg>
        </div>
      </div>
    </div>
  </div>
  <footer class="flex h-[15px] shrink-0 items-center overflow-hidden border-t border-black bg-linear-to-b from-[#eaeaea] to-[#bebebe] pl-[3px] pr-[6px] leading-[15px]"><span class="mr-[2px] h-[8px] w-[5px] bg-[repeating-linear-gradient(90deg,#999_0_1px,#eee_1px_2px)]"></span><span class="flex-1">mouse L:</span><span>M:</span><span class="flex-1 text-right">R:</span></footer>
</section>
</main>

<script>
const NS = 'http://www.w3.org/2000/svg';
function add(parent, tag, attrs, text) {
  const el = document.createElementNS(NS, tag);
  for (const k in attrs) el.setAttribute(k, attrs[k]);
  if (text) el.textContent = text;
  document.getElementById(parent).appendChild(el);
}

// Schematic canvas: minor grid dots and major crosses
let minor = '', major = '';
for (let i = -56; i <= 31; i++) for (let j = -21; j <= 13; j++) {
  const x = Math.floor(1041.300 + i * 18.375), y = Math.floor(530.300 + j * 18.375);
  if (y > 782 || y < 143) continue;
  if (i % 8 === 0 && j % 8 === 0) major += `M${x - 1} ${y}h3v1h-3zM${x} ${y - 1}h1v3h-1z`;
  else minor += `M${x} ${y}h1v1h-1z`;
}
add('dots', 'path', { d: minor, fill: '#8a8a94' });
add('dots', 'path', { d: major, fill: '#fff' });
let pinPath = '';
for (const [x, y] of [[1087,540],[1198,540],[1198,595],[1106,549],[1097,576],[1087,595],[1051,567],[1060,586],
  [1336,466],[1336,484],[1336,503],[1336,521],[1336,540],[1336,650],[1336,668],[1336,687],[1336,705],[1336,724],
  [1556,466],[1556,484],[1556,503],[1556,521],[1556,540],[1446,503],[1446,687],[1391,632],[1391,742],
  [1593,595],[1593,613],[1593,632],[1593,650],[1593,668],[-2,218],[-2,393]])
  pinPath += `M${x - 4} ${y - 4}h8v8h-8z`;
add('pins', 'path', { d: pinPath });

// Plot axes and grid
const X0 = 208.400, DX = 95.900, Y0 = 202.300, DY = 286;
const px = v => Math.floor(X0 + (v - 42) * DX) + .5;
const py = v => Math.floor(Y0 + (2.600 - v) * DY) + .5;
let yTicks = `M202.500 202V719`, xTicks = `M215 724.500H976`;
for (let i = 0; i <= 180; i++) {
  const v = 2.600 - i / 100, y = py(v);
  yTicks += `M${i % 10 === 0 ? 190 : i % 5 === 0 ? 194 : 198} ${y}H202`;
  if (i % 5 === 0) add('grid', 'path', { d: `M215 ${y}H976`, stroke: i % 10 ? '#363636' : '#585858', 'stroke-dasharray': '1 2' });
  if (i % 10 === 0) add('labels', 'text', { x: 188, y: y + 4, 'text-anchor': 'end' }, v.toFixed(1));
}
for (let i = 0; i <= 160; i++) {
  const v = 42 + i / 20, x = px(v);
  if (i > 1) xTicks += `M${x} 725V${i % 10 === 0 ? 737 : i % 2 === 0 ? 733 : 729}`;
  if (i % 10 === 0) {
    if (i) add('grid', 'path', { d: `M${x} 202V719`, stroke: '#585858', 'stroke-dasharray': '1 2' });
    add('labels', 'text', { x: x + 1, y: 754, 'text-anchor': 'middle' }, v.toFixed(1));
  }
}
add('axes', 'path', { d: yTicks }); add('axes', 'path', { d: xTicks });

// Oscillator trace
let w = 'M215 595L218 593L220 588L222 578L224 572';
for (let k = 0; k < 8; k++) {
  const r = 257.500 + k * 95.750, t = 409.500 + Math.min(k, 4) * .5;
  w += `L${r - 29} 572L${r - 25} 574L${r - 3} 583L${r} 584V508L${r + 1} 430L${r + 2} 418L${r + 4} 412L${r + 9} ${t}`;
  if (k === 7) { w += `L975 ${t + 1}`; break; }
  w += `H${r + 49}L${r + 50} ${t + 2}V508L${r + 51} 428L${r + 52} 440V495L${r + 53} 500V598L${r + 56} 595L${r + 60} 586L${r + 63} 573`;
}
document.getElementById('wave').setAttribute('d', w);

// Overview strip trace
let o = 'M240 184L242 190';
for (let x = 245; x < 455; x += 14.200) o += `L${x} 190.500L${x + 3} 187.500H${x + 8}L${x + 10} 190.500`;
o += 'L460 190L463 184L467 181L468 187L473 186L475 178L482 176V185L488 184';
for (let x = 489; x < 945; x += 14.200) {
  if (x > 820 && x < 836) continue;
  const f = Math.min((x - 489) / 320, 1), hi = 172.500 + f * 6.500, lo = 183.500 + f * 3;
  o += `${x > 836 && x < 851 ? 'M' : 'L'}${x} ${lo}L${x + 1.500} ${hi}H${x + 7.500}L${x + 8.500} ${lo}H${x + 13}`;
}
document.getElementById('overview').setAttribute('d', o);
</script>
</body>
</html>
